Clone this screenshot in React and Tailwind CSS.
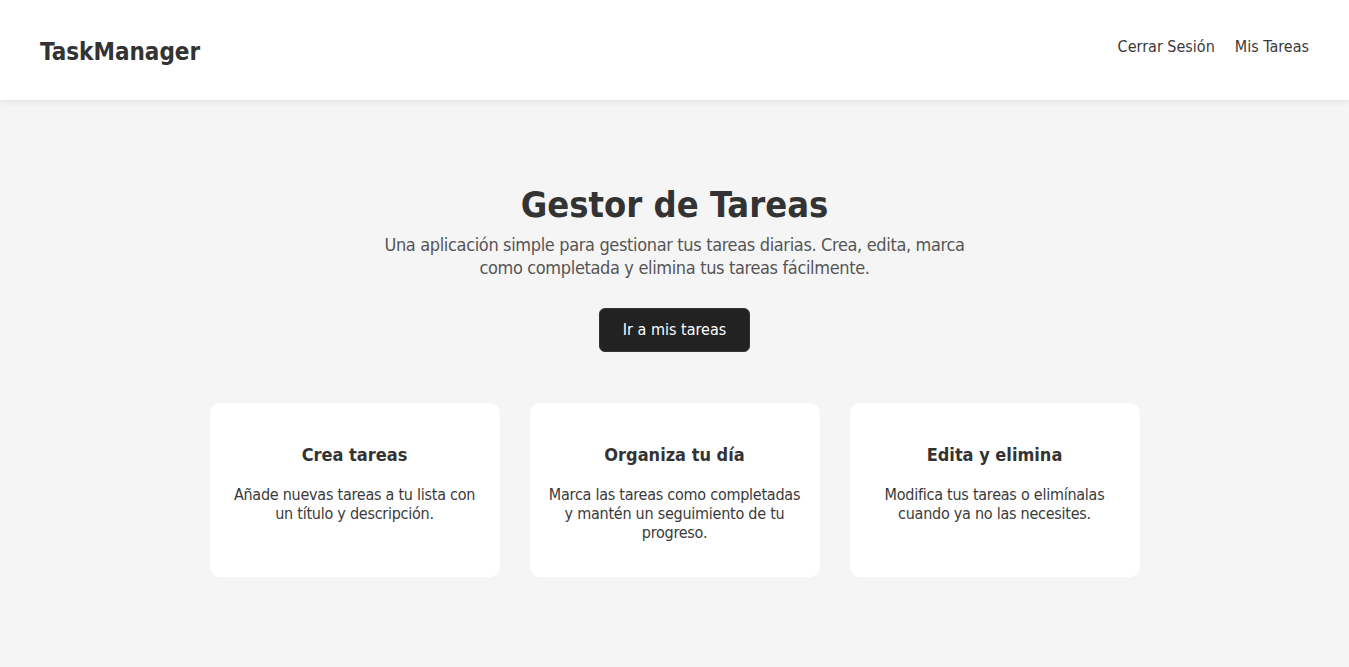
export default function App() {
  const cards = [
    { t: "Crea tareas", d: "Añade nuevas tareas a tu lista con un título y descripción." },
    { t: "Organiza tu día", d: "Marca las tareas como completadas y mantén un seguimiento de tu progreso." },
    { t: "Edita y elimina", d: "Modifica tus tareas o elimínalas cuando ya no las necesites." },
  ];
  return (
    <div className="min-h-screen bg-[#f5f5f5] text-[#333]" style={{ fontFamily: '"DejaVu Sans Condensed", "DejaVu Sans", sans-serif' }}>
      <header className="h-[100px] pt-1 bg-white flex items-center justify-between px-10 shadow-[0_2px_6px_rgba(0,0,0,0.08)]">
        <div className="text-[24px] font-bold text-[#333]">TaskManager</div>
        <nav className="flex gap-5 -mt-2.5 text-[16px] text-[#3a3a3a]">
          <a>Cerrar Sesión</a>
          <a>Mis Tareas</a>
        </nav>
      </header>
      <main className="flex flex-col items-center pt-[82px]">
        <h1 className="text-[36px] font-bold text-[#333] leading-tight">Gestor de Tareas</h1>
        <p className="mt-[6px] max-w-[600px] text-center text-[18px] tracking-[-0.35px] text-[#555] leading-[23px]">
          Una aplicación simple para gestionar tus tareas diarias. Crea, edita, marca como completada y elimina tus tareas fácilmente.
        </p>
        <button className="mt-[29px] w-[151px] h-[44px] rounded-md bg-[#222] text-white text-[16px] border border-[#333]">Ir a mis tareas</button>
        <div className="mt-[51px] flex gap-[30px]">
          {cards.map((c) => (
            <div key={c.t} className="w-[290px] h-[174px] bg-white rounded-[10px] px-4 pt-[38px] text-center">
              <h3 className="text-[18px] font-bold text-[#333]">{c.t}</h3>
              <p className="mt-[17px] text-[16px] tracking-[-0.25px] leading-[19px] text-[#3a3a3a]">{c.d}</p>
            </div>
          ))}
        </div>
      </main>
    </div>
  );
}
